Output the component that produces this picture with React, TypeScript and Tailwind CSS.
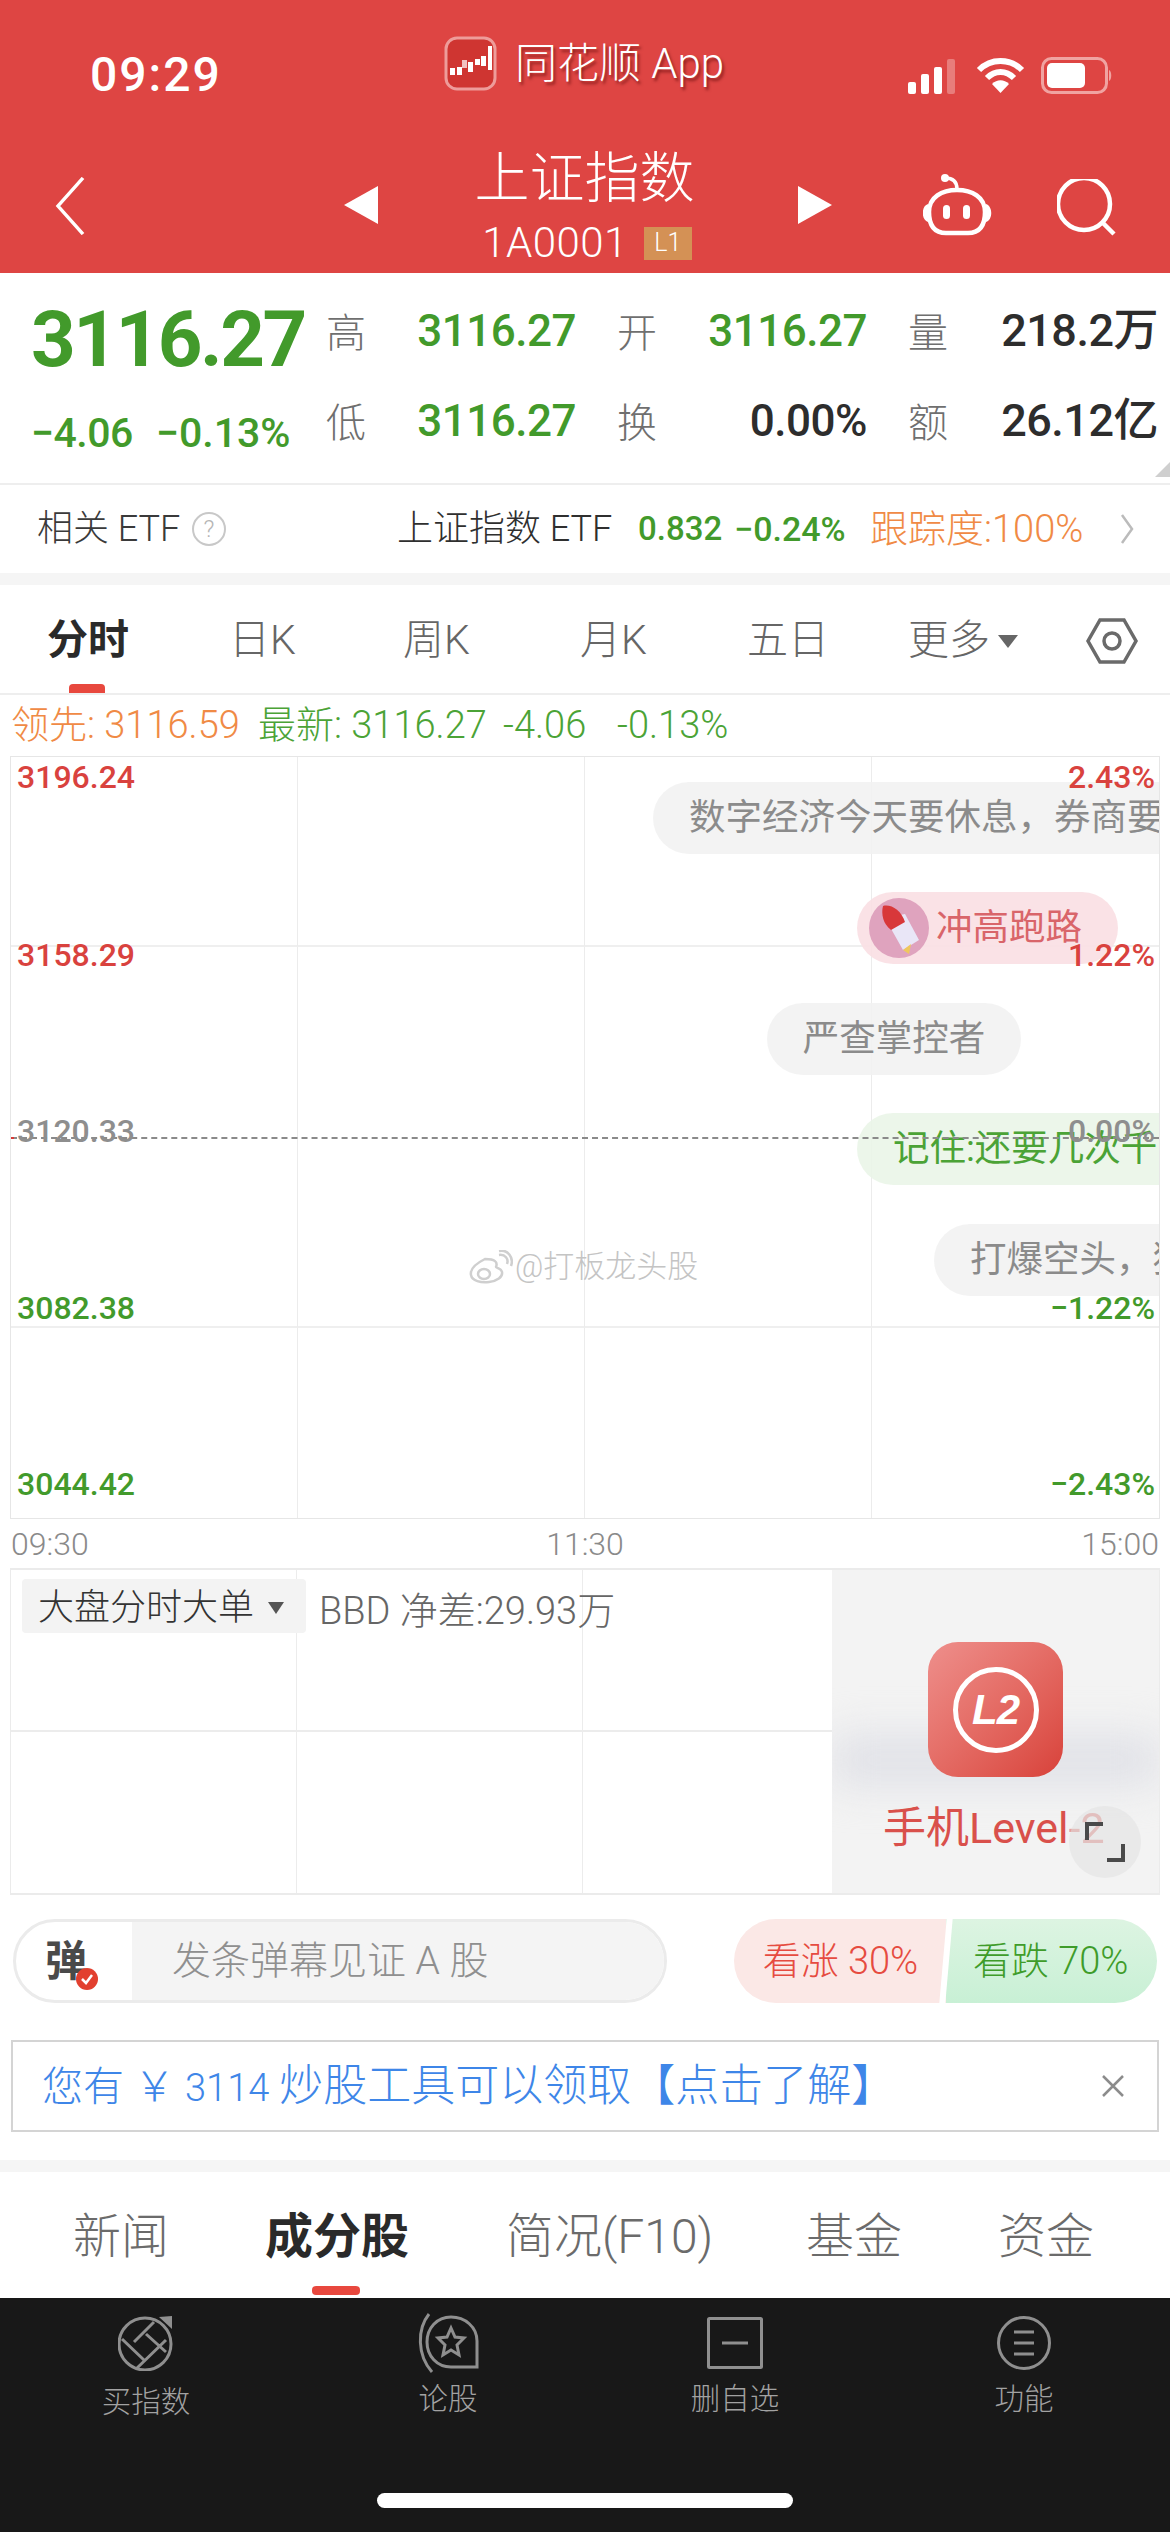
import React from "react";

const GREEN = "text-[#429A2B]";

function QuoteCell({ label, value, green, wide }: { label: string; value: string; green?: boolean; wide?: boolean }) {
    return (
        <div className={`flex items-center justify-between ${wide ? "w-[250px]" : "w-[291px] pr-[41px]"}`}>
            <span className="pt-[5px] text-[40px] font-light text-[#6f6f6f]">{label}</span>
            <span className={`font-medium tracking-[-0.5px] whitespace-nowrap ${wide ? "text-[45px]" : "text-[44px]"} ${green ? GREEN : "text-[#2d2d2d]"}`}>{value}</span>
        </div>
    );
}

function Bubble({ className, children }: { className: string; children: React.ReactNode }) {
    return (
        <div className={`absolute flex h-[72px] items-center whitespace-nowrap rounded-[36px] text-[36.5px] ${className}`}>
            {children}
        </div>
    );
}

function AxisLabel({ className, children }: { className: string; children: React.ReactNode }) {
    return <span className={`absolute text-[32px] font-medium leading-none ${className}`}>{children}</span>;
}

function Rocket() {
    return (
        <svg width="60" height="60" viewBox="0 0 60 60" className="shrink-0">
            <circle cx="30" cy="30" r="30" fill="#DFA3BE" />
            <path d="M16 20 L36 16 L50 42 L34 52 Z" fill="#E9E6F7" />
            <path d="M34 52 L40 56 L42 46 Z" fill="#EFC75E" />
            <path d="M14 8 C22 6 32 12 36 24 L22 32 C14 26 12 16 14 8 Z" fill="#D8383A" />
        </svg>
    );
}

function NavItem({ label, children, labelClass }: { label: string; children: React.ReactNode; labelClass?: string }) {
    return (
        <div className="flex w-[120px] flex-col items-center">
            <div className="flex h-[62px] items-center justify-center">{children}</div>
            <span className={`mt-[11px] whitespace-nowrap text-[29.5px] font-light leading-none text-[#a2a2a2] ${labelClass ?? ""}`}>{label}</span>
        </div>
    );
}

export default function App() {
    return (
        <div className="flex h-[2532px] w-[1170px] flex-col overflow-hidden bg-white font-['Roboto','Noto_Sans_CJK_SC',sans-serif]">
            {/* Red header */}
            <div className="h-[273px] shrink-0 bg-[#DE4543] text-white">
                <div className="flex h-[126px] items-start">
                    <span className="ml-[90px] mt-[44px] w-[354px] text-[48px] font-medium leading-[62px] tracking-[2px]">09:29</span>
                    <div className="mt-[36px] flex items-center">
                        <svg width="53" height="55" viewBox="0 0 53 55">
                            <rect x="2" y="2" width="49" height="51" rx="11" fill="#CF3531" stroke="#EE9C9A" strokeWidth="3" />
                            <g fill="#fff">
                                <rect x="6" y="32" width="5" height="7" />
                                <rect x="13" y="31" width="5" height="8" />
                                <rect x="18" y="24" width="5" height="8" fillOpacity="0.7" />
                                <rect x="24" y="26" width="5" height="10" />
                                <rect x="31" y="23" width="5" height="6" />
                                <rect x="37" y="20" width="5" height="10" />
                                <rect x="44" y="10" width="4" height="24" />
                            </g>
                        </svg>
                        <span className="ml-[18px] whitespace-nowrap text-[42px] font-light leading-none [text-shadow:2px_3px_3px_rgba(80,0,0,0.55)]">同花顺 App</span>
                    </div>
                    <div className="ml-[184px] mt-[57px] flex items-center">
                        <svg width="48" height="36" viewBox="0 0 48 36">
                            <rect x="0" y="24" width="8" height="12" rx="2" fill="#fff" />
                            <rect x="13" y="16" width="8" height="20" rx="2" fill="#fff" />
                            <rect x="26" y="9" width="8" height="27" rx="2" fill="#fff" />
                            <rect x="39" y="1" width="8" height="35" rx="2" fill="#fff" fillOpacity="0.3" />
                        </svg>
                        <svg width="49" height="37" viewBox="0 0 49 37" className="ml-[20px]" fill="none" stroke="#fff" strokeWidth="6">
                            <path d="M3 13 C15 1 34 1 46 13" />
                            <path d="M11 21 C19 13 30 13 38 21" />
                            <path d="M24.5 36 L16 27 C21 22 28 22 33 27 Z" fill="#fff" stroke="none" />
                        </svg>
                        <svg width="72" height="37" viewBox="0 0 72 37" className="ml-[16px]">
                            <rect x="1.5" y="1.5" width="64" height="34" rx="9" fill="none" stroke="#F0A3A1" strokeWidth="3" />
                            <rect x="6" y="6" width="38" height="25" rx="5" fill="#fff" />
                            <path d="M68 13 C71 14 71 23 68 24 Z" fill="#F0A3A1" />
                        </svg>
                    </div>
                </div>
                <div className="flex h-[147px] items-start">
                    <svg width="30" height="58" viewBox="0 0 30 60" preserveAspectRatio="none" className="ml-[55px] mt-[51px]" fill="none" stroke="#fff" strokeWidth="3.5">
                        <path d="M28 1 L3 30 L28 59" />
                    </svg>
                    <svg width="34" height="38" viewBox="0 0 34 38" className="ml-[259px] mt-[60px]">
                        <path d="M34 0 V38 L0 19 Z" fill="#fff" />
                    </svg>
                    <div className="ml-[99px] flex w-[215px] flex-col items-center">
                        <span className="mt-[18px] whitespace-nowrap text-[55px] font-light leading-[68px]">上证指数</span>
                        <div className="ml-[5px] mt-[10px] flex items-center">
                            <span className="text-[42px] font-light leading-none tracking-[0.5px]">1A0001</span>
                            <span className="ml-[16px] flex h-[33px] w-[48px] items-center justify-center bg-[#D49155] text-[25px] font-light">L1</span>
                        </div>
                    </div>
                    <svg width="34" height="38" viewBox="0 0 34 38" className="ml-[106px] mt-[60px]">
                        <path d="M0 0 V38 L34 19 Z" fill="#fff" />
                    </svg>
                    <svg width="70" height="68" viewBox="18 12 70 68" className="ml-[91px] mt-[46px]" fill="none" stroke="#fff" strokeWidth="4.5">
                        <circle cx="40" cy="18" r="4" fill="#fff" stroke="none" />
                        <path d="M40 18 C48 18 52 22 52 29" strokeWidth="3.5" />
                        <path d="M24 52 C24 37 37 30 52 30 C67 30 80 37 80 52 C80 66 74 73 63 73 H41 C30 73 24 66 24 52 Z" />
                        <path d="M23 44 C16 46 16 60 23 62 Z M81 44 C88 46 88 60 81 62 Z" fill="#fff" stroke="none" />
                        <rect x="38" y="45" width="7" height="14" rx="3.5" fill="#fff" stroke="none" />
                        <rect x="58" y="45" width="7" height="14" rx="3.5" fill="#fff" stroke="none" />
                    </svg>
                    <svg width="60" height="62" viewBox="152 19 60 62" className="ml-[64px] mt-[53px]" fill="none" stroke="#fff" strokeWidth="4.5">
                        <circle cx="179" cy="44" r="26" />
                        <path d="M198 63 L209 74" />
                    </svg>
                </div>
            </div>

            {/* Quote */}
            <div className="relative flex h-[212px] shrink-0 border-b-2 border-[#eeeeee]">
                <div className="w-[326px] shrink-0 pl-[31px]">
                    <div className={`mt-[24px] text-[78px] font-bold leading-[86px] tracking-[-2.5px] ${GREEN}`}>3116.27</div>
                    <div className={`mt-[25px] flex text-[41px] font-medium leading-[50px] ${GREEN}`}>
                        <span className="w-[125px] tracking-[-0.5px]">−4.06</span>
                        <span>−0.13%</span>
                    </div>
                </div>
                <div className="flex flex-col">
                    <div className="mt-[28px] flex h-[60px]">
                        <QuoteCell label="高" value="3116.27" green />
                        <QuoteCell label="开" value="3116.27" green />
                        <QuoteCell label="量" value="218.2万" wide />
                    </div>
                    <div className="mt-[30px] flex h-[60px]">
                        <QuoteCell label="低" value="3116.27" green />
                        <QuoteCell label="换" value="0.00%" />
                        <QuoteCell label="额" value="26.12亿" wide />
                    </div>
                </div>
                <div className="absolute bottom-[6px] right-0 h-0 w-0 border-b-[15px] border-l-[15px] border-b-[#cfcfcf] border-l-transparent" />
            </div>

            {/* Related ETF */}
            <div className="flex h-[88px] shrink-0 items-center whitespace-nowrap text-[36px] font-light">
                <span className="ml-[37px] w-[155px] text-[#3a3a3a]">相关 ETF</span>
                <span className="flex h-[34px] w-[34px] items-center justify-center rounded-full border-2 border-[#c8c8c8] text-[24px] text-[#b5b5b5]">?</span>
                <span className="ml-[171px] w-[241px] text-[#2f2f2f]">上证指数 ETF</span>
                <span className={`w-[96px] text-[33px] font-medium ${GREEN}`}>0.832</span>
                <span className={`w-[136px] text-[34px] font-medium ${GREEN}`}>−0.24%</span>
                <span className="w-[250px] text-[38px] text-[#F08A45]">跟踪度:100%</span>
                <svg width="14" height="30" viewBox="0 0 14 30" fill="none" stroke="#bbbbbb" strokeWidth="2.5">
                    <path d="M2 1 L12 15 L2 29" />
                </svg>
            </div>
            <div className="h-[12px] shrink-0 bg-[#f5f5f5]" />

            {/* Period tabs */}
            <div className="flex h-[110px] shrink-0 items-center border-b-2 border-[#eeeeee] pt-[4px] text-[41px] font-light text-[#666666]">
                <div className="relative ml-[47px] flex h-full w-[182px] items-center">
                    <span className="font-semibold text-[#2a2a2a]">分时</span>
                    <span className="absolute bottom-0 left-[22px] h-[9px] w-[36px] rounded-t-[4px] bg-[#E8483E]" />
                </div>
                <span className="w-[174px]">日K</span>
                <span className="w-[177px]">周K</span>
                <span className="w-[167px]">月K</span>
                <span className="w-[161px]">五日</span>
                <span>更多</span>
                <span className="ml-[8px] h-0 w-0 border-x-[10px] border-t-[13px] border-x-transparent border-t-[#666666]" />
                <svg width="52" height="48" viewBox="0 0 52 48" className="ml-[68px]" fill="none" stroke="#6a6a6a" strokeWidth="3.5">
                    <path d="M14 3 H38 L50 24 L38 45 H14 L2 24 Z" />
                    <circle cx="26" cy="24" r="8" />
                </svg>
            </div>

            {/* Latest line */}
            <div className="flex h-[61px] shrink-0 items-center whitespace-nowrap pl-[11px] text-[38px] font-light text-[#4BA336]">
                <span className="w-[247px] text-[#F08A45]">领先: 3116.59</span>
                <span className="w-[245px]">最新: 3116.27</span>
                <span className="w-[114px]">-4.06</span>
                <span>-0.13%</span>
            </div>

            {/* Intraday chart */}
            <div className="relative mx-[10px] grid h-[763px] shrink-0 grid-cols-4 grid-rows-4 overflow-hidden border border-[#e6e6e6]">
                {[0, 1, 2, 3].map((row) =>
                    [0, 1, 2, 3].map((col) => (
                        <div
                            key={`${row}-${col}`}
                            className={`${col < 3 ? "border-r border-[#ececec]" : ""} ${row === 0 || row === 2 ? "border-b-2 border-b-[#efefef]" : ""}`}
                        />
                    ))
                )}

                <Bubble className="left-[642px] top-[25px] w-[600px] bg-[#f2f2f2]/90 pl-[36px] text-[#8b8b8b]">数字经济今天要休息，券商要</Bubble>
                <Bubble className="left-[846px] top-[135px] w-[261px] bg-[#FADFE3]/90 pl-[12px] text-[#D9656A]">
                    <Rocket />
                    <span className="ml-[7px]">冲高跑路</span>
                </Bubble>
                <Bubble className="left-[756px] top-[246px] w-[254px] justify-center bg-[#f2f2f2]/90 text-[#8b8b8b]">严查掌控者</Bubble>
                <Bubble className="left-[846px] top-[356px] w-[400px] bg-[#EAF5E8]/90 pl-[36px] text-[#4BA336]">记住:还要几次千</Bubble>
                <Bubble className="left-[923px] top-[467px] w-[300px] bg-[#f2f2f2]/90 pl-[36px] text-[#8b8b8b]">打爆空头，狠</Bubble>

                <div className="absolute left-0 right-0 top-[380px] border-t-2 border-dashed border-[#8a8a8a]" />
                <span className="absolute left-0 top-[380px] h-[2px] w-[3px] bg-[#D83A36]" />

                <AxisLabel className="left-[6px] top-[4px] text-[#D9423E]">3196.24</AxisLabel>
                <AxisLabel className="left-[6px] top-[182px] text-[#D9423E]">3158.29</AxisLabel>
                <AxisLabel className="left-[6px] top-[358px] text-[#8e8e8e]">3120.33</AxisLabel>
                <AxisLabel className="left-[6px] top-[535px] text-[#429A2B]">3082.38</AxisLabel>
                <AxisLabel className="left-[6px] top-[711px] text-[#429A2B]">3044.42</AxisLabel>
                <AxisLabel className="right-[4px] top-[4px] text-[#D9423E]">2.43%</AxisLabel>
                <AxisLabel className="right-[4px] top-[182px] text-[#D9423E]">1.22%</AxisLabel>
                <AxisLabel className="right-[4px] top-[358px] text-[#8e8e8e]">0.00%</AxisLabel>
                <AxisLabel className="right-[4px] top-[535px] text-[#429A2B]">−1.22%</AxisLabel>
                <AxisLabel className="right-[4px] top-[711px] text-[#429A2B]">−2.43%</AxisLabel>

                {/* Watermark */}
                <div className="absolute left-[458px] top-[487px] flex items-center text-[31px] font-light text-[#c4c4c4]">
                    <svg width="44" height="34" viewBox="0 0 44 34" fill="none" stroke="#cfcfcf" strokeWidth="2.5">
                        <path d="M16 9 C6 14 1 20 2 25 C3 31 12 33 20 32 C28 31 34 27 33 22 C32 18 27 18 27 17 C29 12 26 9 16 9 Z" />
                        <ellipse cx="15" cy="24" rx="6" ry="5" />
                        <path d="M30 5 C36 4 40 9 38 14 M30 1 C39 -1 45 8 42 16" />
                    </svg>
                    <span className="ml-[2px]">@打板龙头股</span>
                </div>
            </div>

            {/* Time axis */}
            <div className="mx-[11px] flex h-[49px] shrink-0 items-center justify-between text-[32px] font-light text-[#8a8a8a]">
                <span>09:30</span>
                <span>11:30</span>
                <span>15:00</span>
            </div>

            {/* Sub chart */}
            <div className="relative mx-[10px] flex h-[327px] shrink-0 border-y-2 border-x border-[#ebebeb]">
                <div className="grid flex-1 grid-cols-[286px_286px_1fr] grid-rows-2">
                    {[0, 1].map((row) =>
                        [0, 1, 2].map((col) => (
                            <div
                                key={`${row}-${col}`}
                                className={`${col < 2 ? "border-r border-[#ececec]" : ""} ${row === 0 ? "border-b-2 border-b-[#ececec]" : ""}`}
                            />
                        ))
                    )}
                </div>
                <div className="relative w-[327px] shrink-0 overflow-hidden bg-[#f3f3f3]">
                    <div className="absolute inset-x-0 top-[165px] h-[50px] bg-[#e0e1e7] blur-[20px]" />
                    <div className="relative ml-[96px] mt-[72px] flex h-[135px] w-[135px] items-center justify-center rounded-[30px] bg-gradient-to-br from-[#EE8F8C] to-[#D8413A]">
                        <div className="flex h-[86px] w-[86px] items-center justify-center rounded-full border-[5px] border-white">
                            <span className="font-['Liberation_Sans',sans-serif] text-[42px] font-bold italic leading-none tracking-[-1px] text-white">L2</span>
                        </div>
                    </div>
                    <div className="relative ml-[51px] mt-[27px] whitespace-nowrap text-[43px] leading-[48px] text-[#D9504B]">
                        手机Level<span className="opacity-50">-2</span>
                    </div>
                    <div className="absolute left-[237px] top-[236px] flex h-[72px] w-[72px] rounded-full bg-[#e0e0e0]/50">
                        <svg width="72" height="72" viewBox="0 0 72 72" fill="none" stroke="#4a4a4a" strokeWidth="4">
                            <path d="M18 34 V18 H34" />
                            <path d="M54 38 V54 H38" />
                        </svg>
                    </div>
                </div>
                <div className="absolute left-[11px] top-[9px] flex h-[54px] w-[284px] items-center rounded-[4px] bg-[#f3f3f3] pl-[16px] pt-[3px] text-[36px] font-light text-[#333333]">
                    大盘分时大单
                    <span className="ml-[14px] h-0 w-0 border-x-[8px] border-t-[12px] border-x-transparent border-t-[#555555]" />
                </div>
                <span className="absolute left-[308px] top-[13px] whitespace-nowrap text-[38px] font-light text-[#666666]">BBD 净差:29.93万</span>
            </div>

            {/* Danmaku input and vote */}
            <div className="mx-[13px] mt-[24px] flex h-[84px] shrink-0">
                <div className="flex w-[655px] overflow-hidden rounded-[42px] border-[3px] border-[#ebebeb]">
                    <div className="relative flex w-[116px] shrink-0 items-center pl-[29px] text-[42px] font-bold text-[#4a4a4a]">
                        弹
                        <span className="absolute left-[60px] top-[46px] flex h-[22px] w-[22px] items-center justify-center rounded-full bg-[#E2402F]">
                            <svg width="14" height="12" viewBox="0 0 14 12" fill="none" stroke="#fff" strokeWidth="2.5">
                                <path d="M2 6 L6 10 L12 2" />
                            </svg>
                        </span>
                    </div>
                    <div className="flex flex-1 items-center bg-[#f4f4f4] pl-[40px] text-[39px] font-light text-[#8f8f8f]">发条弹幕见证 A 股</div>
                </div>
                <div className="relative ml-[67px] flex w-[423px] overflow-hidden rounded-[42px] text-[38px] font-light">
                    <div className="flex w-[212px] items-center justify-center bg-[#FBE8E6] text-[#E64B40]">看涨 30%</div>
                    <div className="flex flex-1 items-center justify-center bg-gradient-to-b from-[#DDF4E2] to-[#C8F0D5] pr-[2px] text-[#3F9C2A]">看跌 70%</div>
                    <div className="absolute bottom-0 left-[209px] top-0 w-[6px] skew-x-[-5deg] bg-white" />
                </div>
            </div>

            {/* Promo notice */}
            <div className="mx-[11px] mt-[37px] flex h-[92px] shrink-0 items-center border-2 border-[#d4d4d4]">
                <span className="ml-[29px] whitespace-nowrap text-[41px] font-light text-[#3E86E8]">
                    您有 ￥ <span className="text-[38px]">3114</span> <span className="text-[44px]">炒股工具可以领取【点击了解】</span>
                </span>
                <svg width="24" height="24" viewBox="0 0 24 24" className="ml-auto mr-[32px]" fill="none" stroke="#8c8c8c" strokeWidth="2.5">
                    <path d="M2 2 L22 22 M22 2 L2 22" />
                </svg>
            </div>
            <div className="mt-[28px] h-[12px] shrink-0 bg-[#f5f5f5]" />

            {/* Detail tabs */}
            <div className="flex h-[126px] shrink-0 items-center whitespace-nowrap pt-[4px] text-[48px] font-light text-[#6b6b6b]">
                <span className="ml-[73px] w-[192px]">新闻</span>
                <div className="relative flex h-full w-[241px] items-center">
                    <span className="font-semibold text-[#2a2a2a]">成分股</span>
                    <span className="absolute bottom-[3px] left-[47px] h-[9px] w-[48px] rounded-[4px] bg-[#E8483E]" />
                </div>
                <span className="w-[300px]">简况(F10)</span>
                <span className="w-[192px]">基金</span>
                <span>资金</span>
            </div>

            {/* Bottom nav */}
            <div className="flex flex-1 flex-col bg-[#181818]">
                <div className="mt-[14px] flex pl-[86px]">
                    <NavItem label="买指数" labelClass="translate-y-[3px]">
                        <svg width="56" height="56" viewBox="9 8 56 56" fill="none" stroke="#8f8f8f" strokeWidth="3">
                            <circle cx="36" cy="37" r="26" />
                            <path d="M13 32 L35 53 M37 27 L57 45 M25 35 L45 15 M27 62 L57 33" />
                            <path d="M50 10 L63 9 V22 Z" fill="#8f8f8f" stroke="none" />
                        </svg>
                    </NavItem>
                    <div className="ml-[182px]">
                        <NavItem label="论股">
                            <svg width="62" height="60" viewBox="0 0 62 60" fill="none" stroke="#8f8f8f" strokeWidth="3">
                                <path d="M34 54 H60 V28 C60 14 48 4 34 4 C20 4 10 15 10 29 C10 43 20 54 34 54 Z" />
                                <path d="M12 1 C0 16 0 42 15 59" />
                                <path d="M34 15 L38 24 L47 25 L40 32 L42 42 L34 37 L26 42 L28 32 L21 25 L30 24 Z" />
                            </svg>
                        </NavItem>
                    </div>
                    <div className="ml-[167px]">
                        <NavItem label="删自选">
                            <svg width="56" height="52" viewBox="0 0 56 52" fill="none" stroke="#8f8f8f" strokeWidth="3">
                                <rect x="1.5" y="1.5" width="53" height="49" rx="1" />
                                <path d="M15 26 H41" />
                            </svg>
                        </NavItem>
                    </div>
                    <div className="ml-[169px]">
                        <NavItem label="功能">
                            <svg width="54" height="54" viewBox="0 0 54 54" fill="none" stroke="#8f8f8f" strokeWidth="3">
                                <circle cx="27" cy="27" r="25.5" />
                                <path d="M17 16 H37 M17 27 H37 M17 38 H37" />
                            </svg>
                        </NavItem>
                    </div>
                </div>
                <div className="mx-auto mt-auto mb-[24px] h-[15px] w-[416px] rounded-[8px] bg-white" />
            </div>
        </div>
    );
}
